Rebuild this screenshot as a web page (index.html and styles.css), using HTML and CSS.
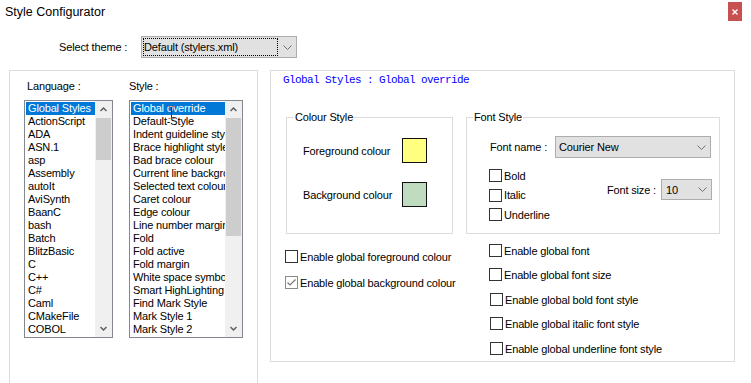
FILE: index.html
```html
<!DOCTYPE html>
<html lang="en">
<head>
  <meta charset="UTF-8">
  <title>Style Configurator</title>
  <link rel="stylesheet" href="styles.css">
</head>
<body>

  <div class="titlebar">
    <span class="title">Style Configurator</span>
    <span class="close">
      <svg width="6" height="6" viewBox="0 0 6 6"><path d="M0.5 0.5L5.5 5.5M5.5 0.5L0.5 5.5" stroke="#fff" stroke-width="1.4"/></svg>
    </span>
  </div>

  <div class="theme-row">
    <span class="theme-label">Select theme :</span>
    <div class="combo theme-combo">
      <span class="value">Default (stylers.xml)</span>
      <span class="arrow"><svg width="9" height="5" viewBox="0 0 9 5"><polyline points="0.5,0.5 4.5,4.5 8.5,0.5" fill="none" stroke="#707070"/></svg></span>
    </div>
  </div>

  <div class="main">
    <!-- listes langage / style -->
    <div class="left-panel">
      <div class="list-col lang-col">
        <div class="col-label">Language :</div>
        <div class="listbox">
          <ul class="items">
            <li class="selected">Global Styles</li>
            <li>ActionScript</li>
            <li>ADA</li>
            <li>ASN.1</li>
            <li>asp</li>
            <li>Assembly</li>
            <li>autoIt</li>
            <li>AviSynth</li>
            <li>BaanC</li>
            <li>bash</li>
            <li>Batch</li>
            <li>BlitzBasic</li>
            <li>C</li>
            <li>C++</li>
            <li>C#</li>
            <li>Caml</li>
            <li>CMakeFile</li>
            <li>COBOL</li>
          </ul>
          <div class="scrollbar">
            <span class="sb-btn"><svg width="7" height="5" viewBox="0 0 7 5"><polyline points="0.5,4 3.5,1 6.5,4" fill="none" stroke="#606060" stroke-width="1.5"/></svg></span>
            <span class="sb-thumb lang-thumb"></span>
            <span class="sb-track"></span>
            <span class="sb-btn"><svg width="7" height="5" viewBox="0 0 7 5"><polyline points="0.5,1 3.5,4 6.5,1" fill="none" stroke="#606060" stroke-width="1.5"/></svg></span>
          </div>
        </div>
      </div>

      <div class="list-col style-col">
        <div class="col-label">Style :</div>
        <div class="listbox">
          <ul class="items">
            <li class="selected">Global override</li>
            <li>Default-Style</li>
            <li>Indent guideline style</li>
            <li>Brace highlight style</li>
            <li>Bad brace colour</li>
            <li>Current line background colour</li>
            <li>Selected text colour</li>
            <li>Caret colour</li>
            <li>Edge colour</li>
            <li>Line number margin</li>
            <li>Fold</li>
            <li>Fold active</li>
            <li>Fold margin</li>
            <li>White space symbol</li>
            <li>Smart HighLighting</li>
            <li>Find Mark Style</li>
            <li>Mark Style 1</li>
            <li>Mark Style 2</li>
          </ul>
          <div class="scrollbar">
            <span class="sb-btn"><svg width="7" height="5" viewBox="0 0 7 5"><polyline points="0.5,4 3.5,1 6.5,4" fill="none" stroke="#606060" stroke-width="1.5"/></svg></span>
            <span class="sb-thumb style-thumb"></span>
            <span class="sb-track"></span>
            <span class="sb-btn"><svg width="7" height="5" viewBox="0 0 7 5"><polyline points="0.5,1 3.5,4 6.5,1" fill="none" stroke="#606060" stroke-width="1.5"/></svg></span>
          </div>
          <svg class="ibeam" width="9" height="15" viewBox="0 0 9 15"><path d="M1.5 1.5H3.5M5.5 1.5H7.5M1.5 13.5H3.5M5.5 13.5H7.5" fill="none" stroke="#e8641e" stroke-width="1"/><path d="M4.5 2V13" stroke="#333" stroke-width="1"/></svg>
        </div>
      </div>
    </div>

    <!-- panneau de droite -->
    <div class="right-panel">
      <div class="style-title">Global Styles : Global override</div>

      <div class="groups">
        <fieldset class="group colour-group">
          <legend>Colour Style</legend>
          <div class="colour-row">
            <span class="colour-label">Foreground colour</span>
            <span class="swatch fg"></span>
          </div>
          <div class="colour-row">
            <span class="colour-label">Background colour</span>
            <span class="swatch bg"></span>
          </div>
        </fieldset>

        <fieldset class="group font-group">
          <legend>Font Style</legend>
          <div class="font-row">
            <span class="font-label">Font name :</span>
            <div class="combo font-combo">
              <span class="value">Courier New</span>
              <span class="arrow"><svg width="9" height="5" viewBox="0 0 9 5"><polyline points="0.5,0.5 4.5,4.5 8.5,0.5" fill="none" stroke="#707070"/></svg></span>
            </div>
          </div>
          <div class="font-row2">
            <div class="style-checks">
              <label class="opt"><span class="box"></span>Bold</label>
              <label class="opt"><span class="box"></span>Italic</label>
              <label class="opt"><span class="box"></span>Underline</label>
            </div>
            <div class="size-field">
              <span>Font size :</span>
              <div class="combo size-combo">
                <span class="value">10</span>
                <span class="arrow"><svg width="9" height="5" viewBox="0 0 9 5"><polyline points="0.5,0.5 4.5,4.5 8.5,0.5" fill="none" stroke="#707070"/></svg></span>
              </div>
            </div>
          </div>
        </fieldset>
      </div>

      <div class="options">
        <div class="opt-col left-opts">
          <label class="opt"><span class="box"></span>Enable global foreground colour</label>
          <label class="opt"><span class="box checked"><svg width="11" height="11" viewBox="0 0 11 11"><polyline points="1.5,5.5 4,8 9.5,2.5" fill="none" stroke="#777" stroke-width="1.2"/></svg></span>Enable global background colour</label>
        </div>
        <div class="opt-col right-opts">
          <label class="opt"><span class="box"></span>Enable global font</label>
          <label class="opt"><span class="box"></span>Enable global font size</label>
          <label class="opt shift"><span class="box"></span>Enable global bold font style</label>
          <label class="opt shift"><span class="box"></span>Enable global italic font style</label>
          <label class="opt shift"><span class="box"></span>Enable global underline font style</label>
        </div>
      </div>
    </div>
  </div>

</body>
</html>
```

FILE: styles.css
```css
* {
  box-sizing: border-box;
}

body {
  margin: 0;
  width: 751px;
  height: 383px;
  overflow: hidden;
  background: #fff;
  color: #000;
  font-family: "Liberation Sans", Arial, sans-serif;
  font-size: 11px;
  letter-spacing: -0.15px;
}

.titlebar {
  display: flex;
  align-items: flex-start;
  height: 34px;
}

.title {
  padding: 4px 0 0 5px;
  font-size: 12.5px;
  line-height: 16px;
  letter-spacing: 0;
}

.close {
  margin: 2px 9px 0 auto;
  width: 14px;
  height: 19px;
  background: #c75050;
  display: flex;
  align-items: center;
  justify-content: center;
}

.theme-row {
  display: flex;
  align-items: center;
  margin-top: 2px;
  padding-left: 59px;
  height: 22px;
}

.theme-label {
  width: 82px;
}

.combo {
  display: flex;
  align-items: center;
  background: #e1e1e1;
  border: 1px solid #adadad;
}

.combo .value {
  flex: 1;
  padding-left: 3px;
  white-space: nowrap;
}

.combo .arrow {
  width: 18px;
  display: flex;
  justify-content: center;
}

.theme-combo {
  width: 156px;
  height: 22px;
}

.theme-combo .value {
  flex: none;
  width: 135px;
  height: 18px;
  margin-left: 1px;
  padding-left: 0;
  line-height: 16px;
  border: 1px dotted #000;
}

.theme-combo .arrow {
  flex: 1;
}

.main {
  display: flex;
  margin-top: 12px;
  padding-left: 9px;
}

.left-panel {
  width: 249px;
  height: 330px;
  border: 1px solid #dcdcdc;
  display: flex;
  gap: 16px;
  padding: 9px 0 0 14px;
}

.col-label {
  height: 13px;
  line-height: 13px;
  margin-bottom: 7px;
}

.lang-col .col-label {
  margin-left: 3px;
}

.lang-col .listbox {
  width: 89px;
}

.style-col .listbox {
  width: 114px;
}

.listbox {
  position: relative;
  display: flex;
  height: 238px;
  border: 1px solid #828790;
  background: #fff;
}

.items {
  flex: 1;
  min-width: 0;
  margin: 0;
  padding: 1px 0 0 1px;
  list-style: none;
  overflow: hidden;
}

.items li {
  height: 13px;
  line-height: 13px;
  padding-left: 2px;
  white-space: nowrap;
  overflow: hidden;
}

.items li.selected {
  background: #0078d7;
  color: #fff;
}

.scrollbar {
  width: 17px;
  background: #f0f0f0;
  display: flex;
  flex-direction: column;
}

.sb-btn {
  height: 17px;
  display: flex;
  align-items: center;
  justify-content: center;
}

.sb-thumb {
  margin: 0 1px;
  background: #cdcdcd;
}

.lang-thumb {
  height: 42px;
}

.style-thumb {
  height: 118px;
}

.sb-track {
  flex: 1;
}

/* curseur de la souris */
.ibeam {
  position: absolute;
  left: 37px;
  top: 4px;
}

.right-panel {
  margin-left: 12px;
  width: 465px;
  height: 292px;
  border: 1px solid #dcdcdc;
  padding-top: 2px;
}

.style-title {
  padding-left: 12px;
  height: 14px;
  line-height: 14px;
  color: #0000ff;
  font-family: "Liberation Mono", "Courier New", monospace;
  font-size: 11px;
  letter-spacing: -0.6px;
}

.groups {
  display: flex;
  gap: 13px;
  margin: 23px 0 0 15px;
}

.group {
  margin: 0;
  height: 124px;
  border: 1px solid #dcdcdc;
  min-inline-size: 0;
}

.group legend {
  padding: 0 1px;
  line-height: 14px;
}

.colour-group {
  width: 167px;
  padding: 14px 0 0 16px;
}

.colour-group legend {
  margin-left: -9px;
}

.colour-row {
  display: flex;
  align-items: center;
  height: 25px;
  margin-bottom: 19px;
}

.colour-label {
  width: 99px;
}

.swatch {
  width: 25px;
  height: 25px;
  border: 1px solid #111;
}

.swatch.fg {
  background: #ffff80;
}

.swatch.bg {
  background: #c0dcc0;
}

.font-group {
  width: 254px;
  padding: 12px 7px 0 22px;
}

.font-group legend {
  margin-left: -16px;
}

.font-row {
  display: flex;
  align-items: center;
}

.font-label {
  width: 66px;
  padding-left: 1px;
}

.font-combo {
  width: 156px;
  height: 22px;
}

.font-row2 {
  display: flex;
  margin-top: 11px;
}

.style-checks {
  display: flex;
  flex-direction: column;
  gap: 6.5px;
}

.size-field {
  margin-left: auto;
  margin-top: 10px;
  display: flex;
  align-items: center;
  gap: 5px;
  height: 21px;
}

.size-combo {
  width: 51px;
  height: 21px;
}

.size-combo .value {
  padding-left: 4px;
}

.opt {
  display: flex;
  align-items: center;
  height: 13px;
  white-space: nowrap;
}

.box {
  width: 13px;
  height: 13px;
  border: 1px solid #333;
  background: #fff;
  margin-right: 2px;
  display: flex;
  align-items: center;
  justify-content: center;
}

.box.checked {
  border-color: #8a8a8a;
}

.options {
  display: flex;
  margin-left: 14px;
}

.opt-col {
  display: flex;
  flex-direction: column;
}

.left-opts {
  width: 204px;
  margin-top: 16px;
  gap: 13px;
}

.right-opts {
  margin-top: 10px;
}

.right-opts .opt + .opt {
  margin-top: 11px;
}

.right-opts .opt:nth-child(2n+3) {
  margin-top: 12px;
}

.right-opts .shift {
  margin-left: 1px;
}
```
